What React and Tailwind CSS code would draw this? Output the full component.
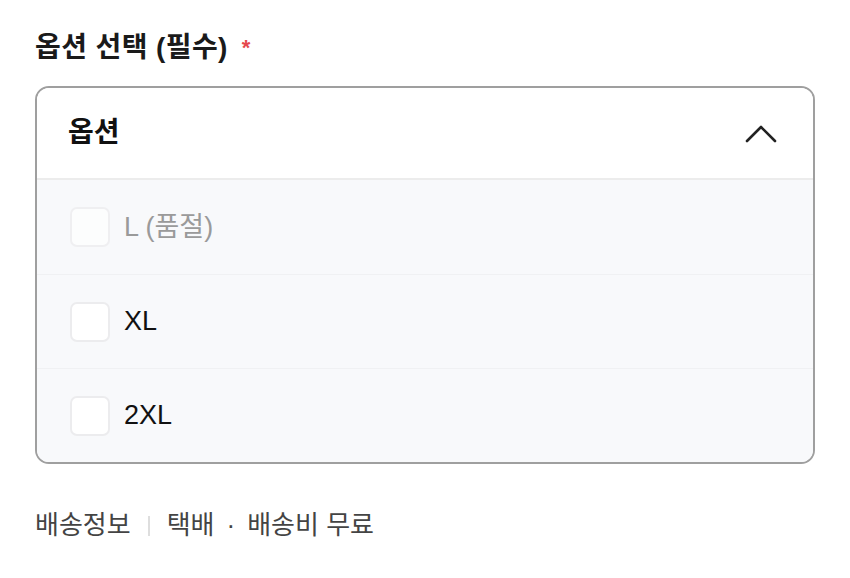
import { useState } from 'react';

const FONT = { fontFamily: '"Liberation Sans", "Noto Sans CJK KR", sans-serif' };

const OPTIONS = [
  { id: 'L', label: 'L (품절)', soldOut: true },
  { id: 'XL', label: 'XL', soldOut: false },
  { id: '2XL', label: '2XL', soldOut: false },
];

function ChevronUp() {
  return (
    <svg width="32" height="20" viewBox="0 0 32 20" fill="none" stroke="#222" strokeWidth="2.6" strokeLinecap="round" strokeLinejoin="round">
      <path d="M2 18 L16 4 L30 18" />
    </svg>
  );
}

export default function App() {
  const [open, setOpen] = useState(true);
  const [picked, setPicked] = useState({});

  function toggle(id) {
    setPicked(prev => ({ ...prev, [id]: !prev[id] }));
  }

  return (
    <main className="w-[850px] h-[578px] bg-white px-[35px] pt-[30px]" style={FONT}>
      <h2 className="text-[28px] leading-[36px] font-semibold text-[#1a1a1a] tracking-[0.4px] flex items-center">
        옵션 선택 (필수)
        <span className="text-[#e5484d] text-[22px] ml-[14px] font-bold">*</span>
      </h2>

      <div className="mt-[20px] border-2 border-[#9f9f9f] rounded-[14px] overflow-hidden">
        <button
          onClick={() => setOpen(o => !o)}
          className="w-full h-[90px] flex items-center justify-between pl-[31px] pr-[36px] bg-white"
        >
          <span className="text-[28px] font-bold text-[#111]">옵션</span>
          <span className={open ? '' : 'rotate-180'}>
            <ChevronUp />
          </span>
        </button>

        {open && (
          <ul className="bg-[#f8f9fb] border-t-2 border-[#ececec]">
            {OPTIONS.map((o, i) => (
              <li
                key={o.id}
                className={`h-[94px] flex items-center pl-[33px] ${i > 0 ? 'border-t border-[#f0f1f3]' : ''}`}
              >
                <label className={`flex items-center gap-[14px] ${o.soldOut ? 'cursor-not-allowed' : 'cursor-pointer'}`}>
                  <input
                    type="checkbox"
                    disabled={o.soldOut}
                    checked={!!picked[o.id]}
                    onChange={() => toggle(o.id)}
                    className="sr-only"
                  />
                  <span className={`w-[40px] h-[40px] rounded-[7px] border-2 border-[#ececee] bg-white ${o.soldOut ? 'opacity-70' : ''}`} />
                  <span className={`text-[27px] ${o.soldOut ? 'text-[#9a9a9a]' : 'text-[#111]'}`}>{o.label}</span>
                </label>
              </li>
            ))}
          </ul>
        )}
      </div>

      <p className="mt-[42px] text-[26px] text-[#444] flex items-center">
        배송정보
        <span className="mx-[17px] w-[2px] h-[20px] bg-[#dedede]" />
        택배
        <span className="mx-[12px]">·</span>
        배송비 무료
      </p>
    </main>
  );
}
